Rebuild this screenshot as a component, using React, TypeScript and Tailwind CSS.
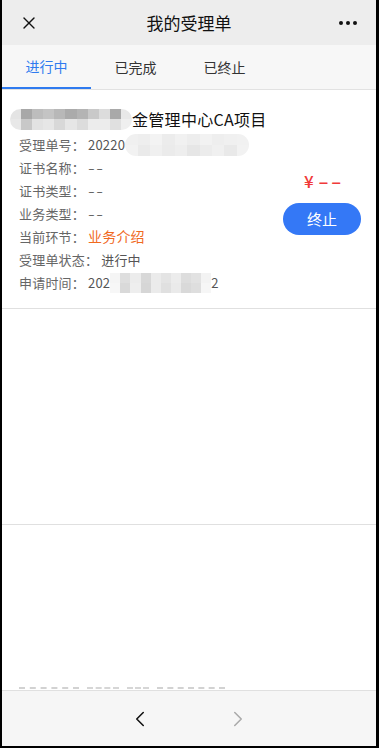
import { X, ChevronLeft, ChevronRight } from 'lucide-react';

const font = { fontFamily: '"Noto Sans CJK SC", "Noto Sans", sans-serif' };

// mosaic blocks for the blurred-out parts of the record
const Mosaic = ({ top, bottom, className }: { top: string[]; bottom: string[]; className: string }) => (
  <span className={`inline-flex flex-col overflow-hidden rounded-full align-middle ${className}`}>
    <span className="flex flex-1">
      {top.map((c, i) => (
        <span key={i} className="h-full flex-1" style={{ backgroundColor: c }} />
      ))}
    </span>
    <span className="flex flex-1">
      {bottom.map((c, i) => (
        <span key={i} className="h-full flex-1" style={{ backgroundColor: c }} />
      ))}
    </span>
  </span>
);

const Row = ({ label, children }: { label: string; children: React.ReactNode }) => (
  <div className="flex h-[23px] items-center whitespace-nowrap text-[13px] tracking-[0.2px] text-[#666]">
    <span className="mr-[3px]">{label}：</span>
    {children}
  </div>
);

const Dash = () => (
  <span className="inline-block origin-left scale-x-150 tracking-[1px]">--</span>
);

const tabs = ['进行中', '已完成', '已终止'];

export default function App() {
  return (
    <div className="h-[748px] w-[379px] bg-black pb-[2px] pl-[2px] pr-[3px]" style={font}>
      <div className="flex h-full flex-col bg-white">
        {/* header */}
        <div className="flex h-[45px] shrink-0 items-center justify-between bg-[#ededed] px-[17px]">
          <X className="h-[20px] w-[20px] text-[#111]" strokeWidth={1.6} />
          <h1 className="text-[17px] text-[#111]">我的受理单</h1>
          <div className="flex gap-[3px] pr-[2px]">
            <span className="h-[4px] w-[4px] rounded-full bg-[#111]" />
            <span className="h-[4px] w-[4px] rounded-full bg-[#111]" />
            <span className="h-[4px] w-[4px] rounded-full bg-[#111]" />
          </div>
        </div>

        {/* tabs */}
        <div className="flex h-[45px] shrink-0 border-b border-[#e2e2e2] bg-[#f7f7f7]">
          {tabs.map((t, i) => (
            <div
              key={t}
              className={`flex w-[89px] items-center justify-center text-[14px] ${
                i === 0 ? 'border-b-2 border-[#2f7bef] text-[#2f7bef]' : 'text-[#333]'
              }`}
            >
              {t}
            </div>
          ))}
        </div>

        {/* record */}
        <div className="flex flex-col border-b border-[#e0e0e0] pb-[14px] pl-[8px] pr-[15px] pt-[18px]">
          <div className="flex h-[22px] items-center text-[16px] tracking-[0.3px] text-[#111]">
            <Mosaic
              className="h-[21px] w-[122px]"
              top={['#e4e4e4', '#a8a8a8', '#bdbdbd', '#c4c4c4', '#b8b8b8', '#ababab', '#b4b4b4', '#c9c9c9', '#dcdcdc', '#a9a9a9', '#e8e8e8']}
              bottom={['#e8e8e8', '#c8c8c8', '#e2e2e2', '#e6e6e6', '#d8d8d8', '#e6e6e6', '#dcdcdc', '#ececec', '#ececec', '#e0e0e0', '#efefef']}
            />
            <span>金管理中心CA项目</span>
          </div>
          <div className="flex">
            <div className="flex flex-1 flex-col pl-[9px] pt-[3px]">
              <Row label="受理单号">
                <span className="text-[#555]">20220</span>
                <Mosaic
                  className="h-[22px] w-[124px]"
                  top={['#f0f0f0', '#eeeeee', '#f3f3f3', '#ececec', '#f1f1f1', '#ededed', '#f2f2f2', '#eeeeee', '#f0f0f0', '#f1f1f1']}
                  bottom={['#f2f2f2', '#eaeaea', '#f0f0f0', '#ebebeb', '#eeeeee', '#e6e6e6', '#ececec', '#f0f0f0', '#e9e9e9', '#f2f2f2']}
                />
              </Row>
              <Row label="证书名称">
                <Dash />
              </Row>
              <Row label="证书类型">
                <Dash />
              </Row>
              <Row label="业务类型">
                <Dash />
              </Row>
              <Row label="当前环节">
                <span className="text-[14px] text-[#f06a1f]">业务介绍</span>
              </Row>
              <Row label="受理单状态">
                <span className="text-[#555]">进行中</span>
              </Row>
              <Row label="申请时间">
                <span className="text-[#555]">202</span>
                <Mosaic
                  className="h-[20px] w-[101px] rounded-none"
                  top={['#f5f5f5', '#dedede', '#ececec', '#d8d8d8', '#ebebeb', '#e4e4e4', '#ececec', '#dddddd', '#e2e2e2', '#f3f3f3']}
                  bottom={['#f7f7f7', '#d9d9d9', '#eeeeee', '#d6d6d6', '#ebebeb', '#e0e0e0', '#eaeaea', '#d9d9d9', '#dedede', '#f6f6f6']}
                />
                <span className="text-[#555]">2</span>
              </Row>
            </div>
            <div className="flex w-[78px] flex-col items-center pt-[41px]">
              <span className="flex items-center pr-[8px] text-[17px] font-medium leading-[20px] text-[#f03a3a]">
                ¥
                <span className="ml-[4px] inline-block origin-left scale-x-[1.8] tracking-[1px]">--</span>
              </span>
              <button className="mt-[12px] h-[32px] w-[78px] rounded-full bg-[#3478f6] text-[15px] text-white">
                终止
              </button>
            </div>
          </div>
        </div>

        <div className="h-[216px] shrink-0 border-b border-[#e0e0e0]" />

        <div className="flex flex-1 flex-col justify-end overflow-hidden">
          <div className="flex gap-[8px] pb-[1px] pl-[17px]">
            <span className="w-[60px] border-t-2 border-dashed border-[#d2d2d2]" />
            <span className="w-[32px] border-t-2 border-dashed border-[#d6d6d6]" />
            <span className="w-[22px] border-t-2 border-dashed border-[#d6d6d6]" />
            <span className="w-[68px] border-t-2 border-dashed border-[#d2d2d2]" />
          </div>
        </div>

        {/* footer navigation */}
        <div className="flex h-[56px] shrink-0 items-center justify-center gap-[72px] border-t border-[#e0e0e0] bg-[#f6f6f6]">
          <ChevronLeft className="h-[26px] w-[26px] text-[#111]" strokeWidth={1.4} />
          <ChevronRight className="h-[26px] w-[26px] text-[#aaa]" strokeWidth={1.4} />
        </div>
      </div>
    </div>
  );
}
